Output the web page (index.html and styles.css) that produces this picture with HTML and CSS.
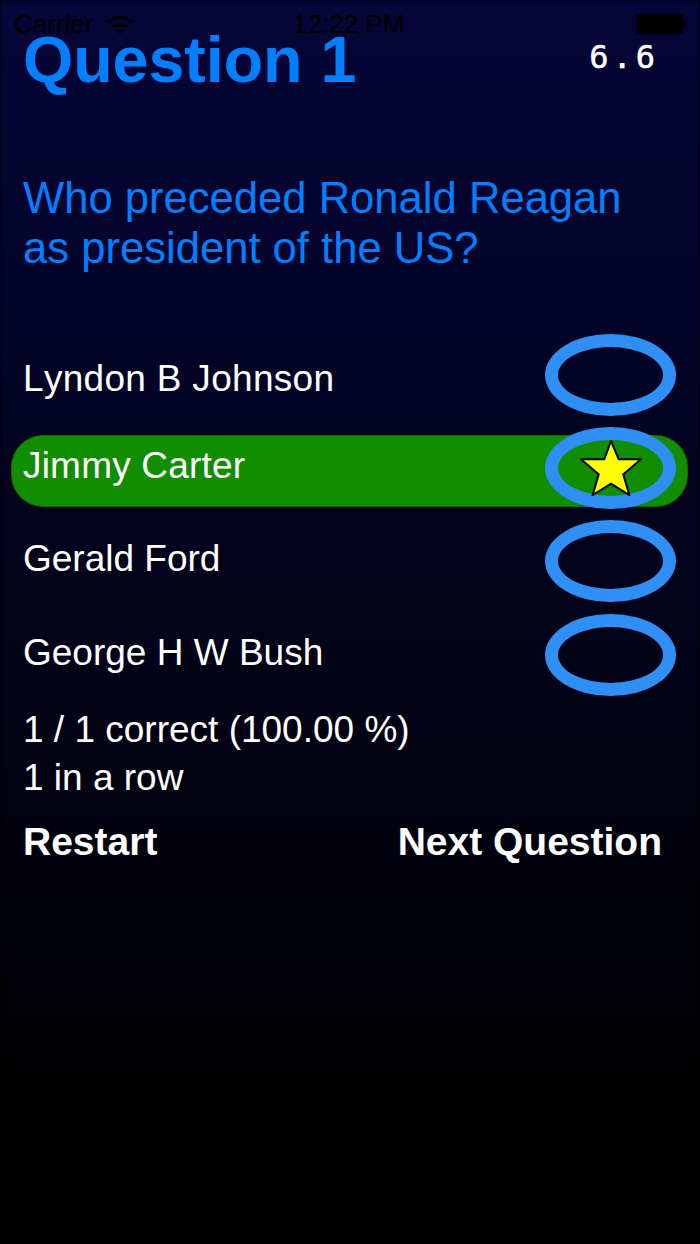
FILE: index.html
```html
<!DOCTYPE html>
<html lang="en">
<head>
    <meta charset="UTF-8">
    <meta name="viewport" content="width=device-width, initial-scale=1.0">
    <title>Question 1</title>
    <link rel="stylesheet" href="styles.css">
</head>
<body>

    <!-- Status bar sits over the title -->
    <div class="status-bar">
        <div class="status-left">
            <span>Carrier</span>
            <svg class="wifi" width="28" height="20" viewBox="0 0 28 20">
                <path d="M1 7 A19 19 0 0 1 27 7 L24.4 9.8 A15 15 0 0 0 3.6 9.8 Z" />
                <path d="M6 12 A12 12 0 0 1 22 12 L19.4 14.8 A8 8 0 0 0 8.6 14.8 Z" />
                <path d="M10.6 16.6 A5 5 0 0 1 17.4 16.6 L14 20 Z" />
            </svg>
        </div>
        <div class="status-time">12:22 PM</div>
        <div class="battery"><div class="battery-cap"></div></div>
    </div>

    <div class="header">
        <h1 class="title">Question 1</h1>
        <div class="timer">6.6</div>
    </div>

    <div class="question">Who preceded Ronald Reagan as president of the US?</div>

    <div class="answers">
        <div class="answer low">
            <span class="answer-text">Lyndon B Johnson</span>
            <div class="ring"></div>
        </div>
        <div class="answer correct">
            <span class="answer-text">Jimmy Carter</span>
            <div class="ring">
                <svg class="star" width="62" height="56" viewBox="0 0 62 56">
                    <polygon points="31,1 38.7,19.3 61,19.3 43.3,34.3 49.3,55 31,43.7 12.7,55 18.7,34.3 1,19.3 24.3,19.3" />
                </svg>
            </div>
        </div>
        <div class="answer">
            <span class="answer-text">Gerald Ford</span>
            <div class="ring"></div>
        </div>
        <div class="answer">
            <span class="answer-text">George H W Bush</span>
            <div class="ring"></div>
        </div>
    </div>

    <div class="score">
        <div>1 / 1 correct (100.00 %)</div>
        <div>1 in a row</div>
    </div>

    <div class="buttons">
        <span class="button">Restart</span>
        <span class="button">Next Question</span>
    </div>

</body>
</html>
```

FILE: styles.css
```css
html {
    height: 100%;
}

body {
    margin: 0;
    height: 1244px;
    box-sizing: border-box;
    overflow: hidden;
    background: linear-gradient(to bottom, #050538 0%, #000 90%);
    box-shadow: inset 0 0 3px #000;
    color: white;
    font-family: "Liberation Sans", Arial, sans-serif;
    font-kerning: none;
}

/* Status bar */
.status-bar {
    position: absolute;
    top: 8px;
    left: 14px;
    right: 16px;
    height: 32px;
    display: flex;
    justify-content: space-between;
    align-items: center;
    color: #000;
    font-size: 26px;
}

.status-left {
    display: flex;
    align-items: center;
    gap: 13px;
    width: 257px;
}

.wifi {
    fill: #000;
}

.status-time {
    flex: 1;
    margin-left: 22px;
}

.battery {
    position: relative;
    width: 47px;
    height: 20px;
    margin-right: 1px;
    background: #000;
    border-radius: 3px;
}

.battery-cap {
    position: absolute;
    top: 6px;
    right: -3px;
    width: 3px;
    height: 8px;
    background: #000;
}

/* Title and timer */
.header {
    display: flex;
    justify-content: space-between;
    padding: 23px 41px 0 23px;
}

.title {
    margin: 0;
    font-size: 64.5px;
    line-height: 74px;
    font-weight: bold;
    color: #007fff;
}

.timer {
    margin-top: 10px;
    font-family: "DejaVu Sans Mono", monospace;
    font-size: 32px;
    letter-spacing: 4px;
    line-height: 48px;
    -webkit-text-stroke: 0.5px white;
}

.question {
    margin-top: 76px;
    padding: 0 60px 0 23px;
    font-size: 43.6px;
    line-height: 50px;
    color: #007fff;
}

/* Answer rows */
.answers {
    display: flex;
    flex-direction: column;
    margin-top: 61px;
    padding: 0 12px 0 11px;
}

.answer {
    display: flex;
    justify-content: space-between;
    align-items: center;
    height: 82px;
    padding: 0 12px;
    font-size: 37px;
    margin-bottom: 12px;
}

/* Text lines do not sit on the ring's middle in the original */
.answer-text {
    padding-bottom: 4px;
}

.low .answer-text {
    padding: 8px 0 0;
    letter-spacing: 0.3px;
}

.correct .answer-text {
    padding-bottom: 10px;
    letter-spacing: 0.2px;
}

.correct {
    height: 72px;
    margin-top: 7px;
    margin-bottom: 13px;
    padding: 0 11px;
    border: 1px solid #0d6b00;
    box-sizing: border-box;
    border-radius: 32px;
    background: #138d00;
}

.ring {
    box-sizing: border-box;
    display: flex;
    justify-content: center;
    align-items: center;
    flex-shrink: 0;
    width: 131px;
    height: 82px;
    border: 13px solid #2f8ff5;
    border-radius: 50%;
}

.correct .ring {
    margin: -8px 0 -2px;
}

.star {
    flex-shrink: 0;
    fill: #ffff00;
    stroke: #000;
    stroke-width: 2;
}

/* Score and buttons */
.score {
    padding: 0 23px;
    margin-top: -2px;
    font-size: 37px;
    line-height: 48px;
}

.buttons {
    display: flex;
    justify-content: space-between;
    padding: 0 38px 0 23px;
    margin-top: 18px;
}

.button {
    font-size: 39px;
    font-weight: bold;
}
```
